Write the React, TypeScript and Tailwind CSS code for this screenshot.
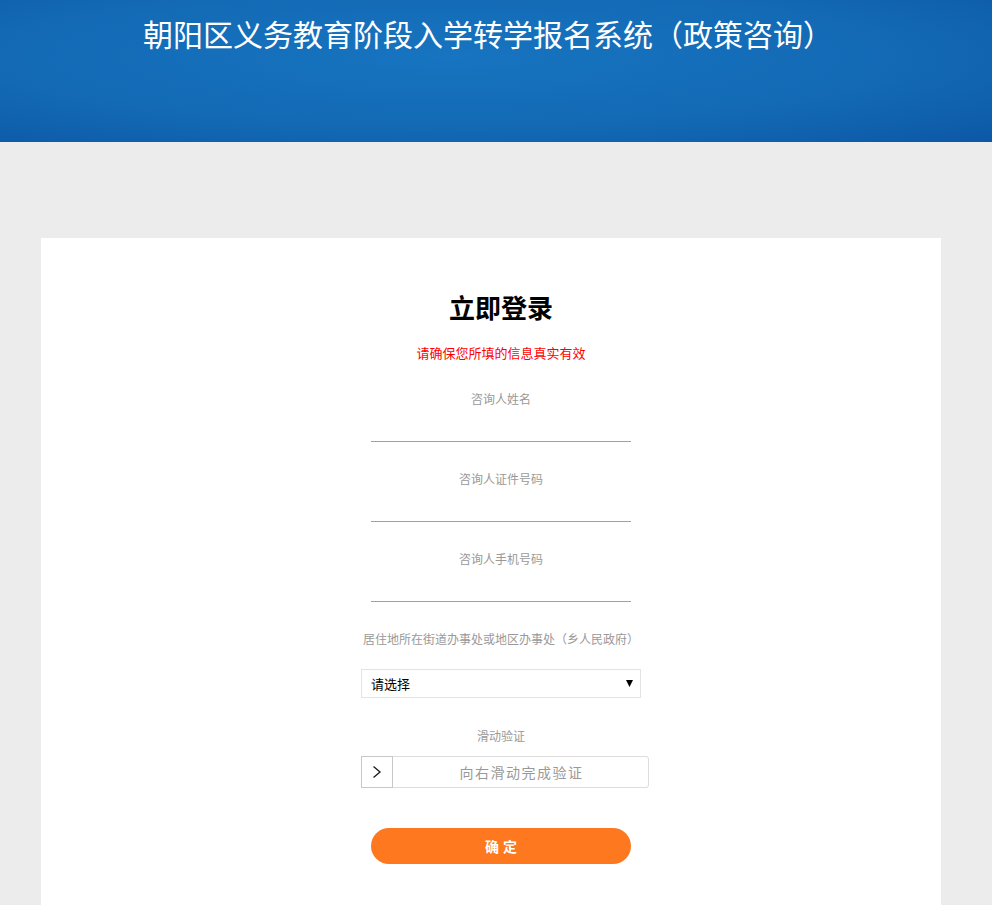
import React from "react";

const font = { fontFamily: '"Microsoft YaHei", "Noto Sans CJK SC", "Noto Sans", sans-serif' };

function Field({ label }: { label: string }) {
  return (
    <div className="flex flex-col items-center">
      <div className="text-[12px] leading-[16px] text-[#999]">{label}</div>
      <div className="mt-[34px] h-px w-[260px] bg-[#a0a0a0]" />
    </div>
  );
}

export default function App() {
  return (
    <div className="min-h-[905px] bg-[#ececec]" style={font}>
      <header className="h-[142px] bg-[radial-gradient(ellipse_at_45%_40%,#1774c0_0%,#1369b4_60%,#0c58a6_100%)]">
        <div className="flex justify-center pt-[13px] pr-[16px]">
          <h1 className="text-[30px] leading-[40px] text-white font-normal">
            朝阳区义务教育阶段入学转学报名系统（政策咨询）
          </h1>
        </div>
      </header>
      <main className="ml-[41px] mt-[96px] h-[667px] w-[900px] bg-white flex flex-col items-center pl-[20px]">
        <h2 className="mt-[52px] text-[26px] leading-[34px] font-bold text-black">立即登录</h2>
        <p className="mt-[21px] text-[13px] leading-[16px] text-[#ff0000]">请确保您所填的信息真实有效</p>
        <div className="mt-[30px] flex flex-col gap-[29px]">
          <Field label="咨询人姓名" />
          <Field label="咨询人证件号码" />
          <Field label="咨询人手机号码" />
        </div>
        <div className="mt-[29px] text-[12px] leading-[16px] text-[#999]">居住地所在街道办事处或地区办事处（乡人民政府）</div>
        <div className="mt-[22px] flex h-[29px] w-[280px] items-center justify-between border border-[#e3e3e3] bg-white pl-[9px] pr-[7px]">
          <span className="text-[13px] text-black">请选择</span>
          <svg width="7" height="7" viewBox="0 0 7 7">
            <path d="M0 0 H7 L3.5 7 Z" fill="#000" />
          </svg>
        </div>
        <div className="mt-[30px] text-[12px] leading-[16px] text-[#999]">滑动验证</div>
        <div className="mt-[12px] ml-[8px] flex h-[32px] w-[288px] rounded-[3px] border border-[#dcdcdc] bg-white">
          <div className="flex h-[32px] w-[32px] -mt-px -ml-px items-center justify-center border border-[#c8c8c8] bg-white">
            <svg width="12" height="14" viewBox="0 0 12 14" fill="none">
              <path d="M2.5 1.5 L9 7 L2.5 12.5" stroke="#222" strokeWidth="1.4" />
            </svg>
          </div>
          <div className="flex flex-1 items-center justify-center pl-[2px] text-[14px] tracking-[1.5px] text-[#999]">向右滑动完成验证</div>
        </div>
        <button className="mt-[40px] h-[36px] w-[260px] rounded-full bg-[#fd781f] pl-[4px] text-[14px] font-bold tracking-[4px] text-white">
          确定
        </button>
      </main>
    </div>
  );
}
